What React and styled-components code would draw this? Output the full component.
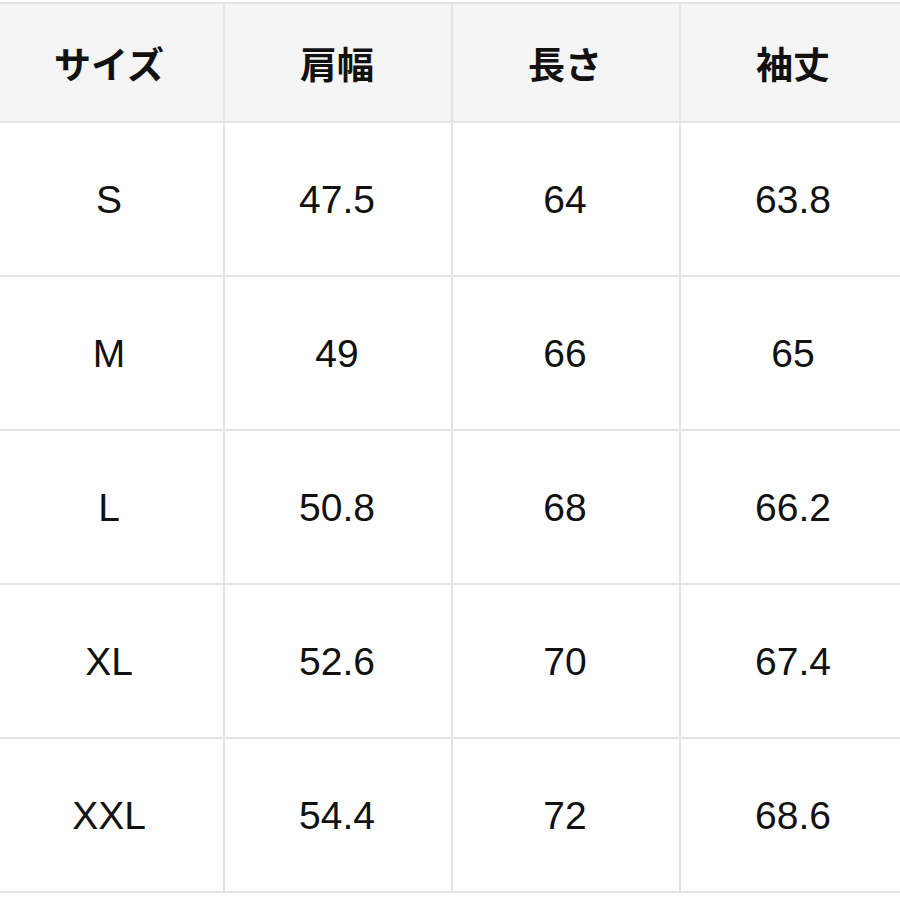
import React from "react";
import styled, { createGlobalStyle } from "styled-components";

const GlobalStyle = createGlobalStyle`
  html, body {
    margin: 0;
    padding: 0;
    background: #ffffff;
    overflow: hidden;
  }
`;

const headers = ["サイズ", "肩幅", "長さ", "袖丈"];

const rows = [
  ["S", "47.5", "64", "63.8"],
  ["M", "49", "66", "65"],
  ["L", "50.8", "68", "66.2"],
  ["XL", "52.6", "70", "67.4"],
  ["XXL", "54.4", "72", "68.6"],
];

const Page = styled.div`
  width: 900px;
  height: 900px;
  overflow: hidden;
  padding-top: 2px;
  box-sizing: border-box;
`;

const Grid = styled.div`
  margin-left: -5px;
  width: 916px;
  display: grid;
  grid-template-columns: repeat(4, 226px);
  grid-template-rows: 117px repeat(5, 152px);
  gap: 2px;
  padding: 2px;
  background: #e4e4e4;
`;

const Cell = styled.div`
  display: flex;
  align-items: center;
  justify-content: center;
  padding-right: 2px;
  background: ${(p) => (p.$head ? "#f5f5f5" : "#ffffff")};
  color: #111111;
  font-family: ${(p) =>
    p.$head
      ? '"Noto Sans CJK JP", "Noto Sans", sans-serif'
      : '"Liberation Sans", Arial, sans-serif'};
  font-weight: ${(p) => (p.$head ? 700 : 400)};
  font-size: ${(p) => (p.$head ? "37px" : "39px")};
  padding-top: ${(p) => (p.$head ? "0" : "2px")};
`;

export default function App() {
  return (
    <Page>
      <GlobalStyle />
      <Grid>
        {headers.map((h) => (
          <Cell key={h} $head>
            {h}
          </Cell>
        ))}
        {rows.map((r) =>
          r.map((v, i) => <Cell key={r[0] + i}>{v}</Cell>)
        )}
      </Grid>
    </Page>
  );
}
